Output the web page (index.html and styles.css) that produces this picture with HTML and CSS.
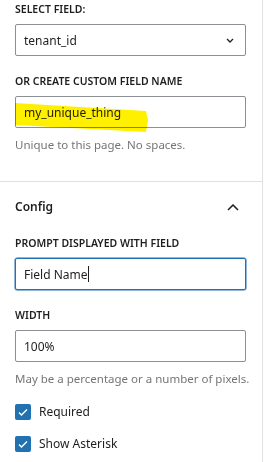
FILE: index.html
```html
<!DOCTYPE html>
<html>
<head>
<meta charset="utf-8">
<title>Field settings</title>
<link rel="stylesheet" href="styles.css">
</head>
<body>
<div class="panel">
	<div class="section">
		<label class="lbl first">Select field:</label>
		<div class="box select">
			<span>tenant_id</span>
			<svg class="chev" width="8" height="5" viewBox="0 0 8 5"><path d="M1 1l3 3 3-3" fill="none" stroke="#1e1e1e" stroke-width="1.3"/></svg>
		</div>
		<label class="lbl">Or create custom field name</label>
		<div class="box marked">
			<span>my_unique_thing</span>
			<svg class="marker" width="134" height="32" viewBox="0 0 134 32"><polygon points="0,0 131,8 133,17 131,29 0,22" fill="#fff000"/></svg>
		</div>
		<p class="help">Unique to this page. No spaces.</p>
	</div>
	<div class="section config">
		<div class="head">
			<h2>Config</h2>
			<svg width="12" height="7" viewBox="0 0 12 7"><path d="M1 6l5-5 5 5" fill="none" stroke="#1e1e1e" stroke-width="1.5"/></svg>
		</div>
		<label class="lbl after-head">Prompt displayed with field</label>
		<div class="box focus"><span>Field Name</span><i class="caret"></i></div>
		<label class="lbl">Width</label>
		<div class="box"><span>100%</span></div>
		<p class="help">May be a percentage or a number of pixels.</p>
		<div class="check"><span class="tick"><svg width="16" height="16" viewBox="0 0 16 16"><path d="M4 8.5l2.5 2.5 5.5-5.5" fill="none" stroke="#fff" stroke-width="1.4"/></svg></span>Required</div>
		<div class="check"><span class="tick"><svg width="16" height="16" viewBox="0 0 16 16"><path d="M4 8.5l2.5 2.5 5.5-5.5" fill="none" stroke="#fff" stroke-width="1.4"/></svg></span>Show Asterisk</div>
	</div>
</div>
</body>
</html>
```

FILE: styles.css
```css
body{
	margin:0;
	background:#fff;
	font-family:"Noto Sans","Open Sans",sans-serif;
	color:#1e1e1e;
}
.panel{
	width:262px;
	height:462px;
	border-right:1px solid #e0e0e0;
}
.section{
	padding:0 16px 28px 15px;
}
.section.config{
	border-top:1px solid #e0e0e0;
	padding-top:16px;
}
.lbl{
	display:block;
	font-size:10.5px;
	line-height:16px;
	font-weight:600;
	text-transform:uppercase;
	margin:17px 0 7px;
}
.lbl.first{ margin-top:0; padding-top:1px; }
.lbl.after-head{ margin-top:19px; }
.box{
	position:relative;
	display:flex;
	align-items:center;
	height:32px;
	box-sizing:border-box;
	border:1px solid #8c8f94;
	border-radius:2px;
	padding:0 8px;
	font-size:12px;
}
.select{ justify-content:space-between; padding-right:11px; }
.chev{ display:block; }
.marked span{ position:relative; }
.marker{
	position:absolute;
	left:-1px;
	top:6px;
	mix-blend-mode:multiply;
}
.focus{
	border-color:#2271b1;
	box-shadow:0 0 0 .5px #2271b1;
}
.caret{
	display:inline-block;
	width:1px;
	height:16px;
	background:#1e1e1e;
}
.help{
	margin:9px 0 0;
	font-size:11.5px;
	line-height:16px;
	color:#757575;
	white-space:nowrap;
}
.head{
	display:flex;
	justify-content:space-between;
	align-items:center;
	padding-right:7px;
}
.head h2{
	margin:0;
	font-size:12px;
	line-height:18px;
	font-weight:600;
}
.check{
	display:flex;
	align-items:center;
	gap:8px;
	font-size:12px;
	line-height:16px;
	margin-top:17px;
}
.check + .check{ margin-top:16px; }
.tick{
	width:16px;
	height:16px;
	background:#2271b1;
	border-radius:2px;
}
.tick svg{ display:block; }
```
